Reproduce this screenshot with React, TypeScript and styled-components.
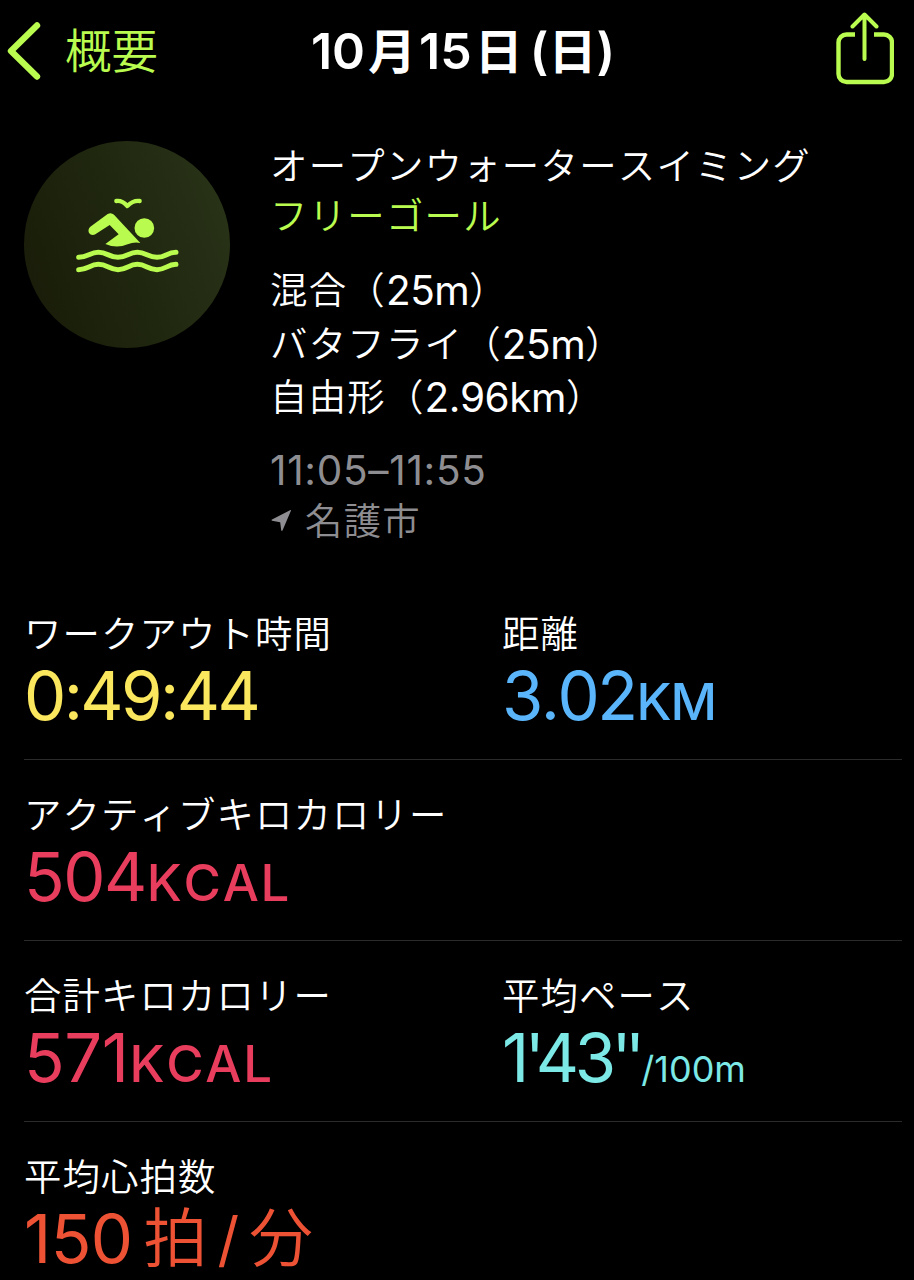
import React from "react";
import { createGlobalStyle, styled } from "styled-components";

interface IMetric {
  label: string;
  color: string;
  value: React.ReactNode;
}

const lime = "#b9fb4f";

export default function App() {
  return (
    <>
      <GlobalStyle />
      <Screen>
        <Header>
          <BackButton>
            <svg width="36" height="60" viewBox="0 0 36 60" fill="none">
              <path d="M30 4.5L4 30L30 55.5" stroke={lime} strokeWidth="6.4" strokeLinecap="round" strokeLinejoin="round" />
            </svg>
            <span>概要</span>
          </BackButton>
          <Title>
            <b>10</b>
            <Kanji>月</Kanji>
            <b>15</b>
            <Kanji>日</Kanji>
            <Paren>(</Paren>
            <span>日</span>
            <b>)</b>
          </Title>
          <ShareButton>
            <svg width="58" height="74" viewBox="0 0 58 74" fill="none" stroke={lime} strokeLinecap="round" strokeLinejoin="round">
              <path d="M19 22.5H10.5a8 8 0 0 0-8 8V62a8 8 0 0 0 8 8H48a8 8 0 0 0 8-8V30.5a8 8 0 0 0-8-8H38" strokeWidth="4.4" strokeLinecap="butt" />
              <path d="M28.5 47V3M16.5 14.5L28.5 2.5L40.5 14.5" strokeWidth="4" />
            </svg>
          </ShareButton>
        </Header>

        <Hero>
          <Badge>
            <SwimIcon />
          </Badge>
          <Details>
            <Line $height={50}>オープンウォータースイミング</Line>
            <Line $height={50} $color={lime}>フリーゴール</Line>
            <Strokes>
              <Line $height={53.5}>混合（<Latin>25m</Latin>）</Line>
              <Line $height={53.5}>バタフライ（<Latin>25m</Latin>）</Line>
              <Line $height={53.5}>自由形（<Latin>2.96km</Latin>）</Line>
            </Strokes>
            <Line $height={50} $color="#8e8e92">
              <Latin $track={0.7}>11:05–11:55</Latin>
            </Line>
            <Line $height={50} $color="#8e8e92">
              <Arrow width="35" height="22" viewBox="0 0 35 22" fill="#8e8e92">
                <path d="M21 0.5L12.5 20.5Q11.8 21.5 11.2 20.3L10.2 12.3L2 10.8Q1 10 2 9.4L20 0.3Q21.2 -0.3 21 0.5Z" />
              </Arrow>
              名護市
            </Line>
          </Details>
        </Hero>

        {rows.map((row, index) => (
          <MetricRow key={index}>
            {row.map((metric) => (
              <div key={metric.label}>
                <Label>{metric.label}</Label>
                <Value $color={metric.color}>{metric.value}</Value>
              </div>
            ))}
          </MetricRow>
        ))}
      </Screen>
    </>
  );
}

function SwimIcon() {
  return (
    <svg width="207" height="207" viewBox="12 33 621 621" fill={lime} stroke={lime} strokeLinecap="round" strokeLinejoin="round">
      <g fill="none" strokeWidth="15">
        <path d="M289 213C303 211 314 219 322 228C331 219 343 211 359 213" strokeWidth="13" />
        <path d="M176 382C203 382 210 367 235 367C262 367 268 382 294 382C321 382 326 367 352 367C378 367 384 382 411 382C436 382 441 367 468 367" />
        <path d="M176 419C203 419 210 403 235 403C262 403 268 419 294 419C321 419 326 403 352 403C378 403 384 419 411 419C436 419 441 404 468 403" />
      </g>
      <circle cx="373" cy="294" r="29.5" stroke="none" />
      <path
        stroke="none"
        d="M211 290L263 252Q273 246 282 254L361 339Q342 335 323 343Q290 357 256 342L296 313L269 285L226 313C210 321 198 302 211 290Z"
      />
    </svg>
  );
}

const GlobalStyle = createGlobalStyle`
  body {
    margin: 0;
    background: #000;
  }
`;

const Screen = styled.main`
  box-sizing: border-box;
  width: 914px;
  height: 1280px;
  overflow: hidden;
  background: #000;
  color: #fff;
  font-family: "Noto Sans CJK JP", sans-serif;
  font-weight: 350;
  font-kerning: none;
  white-space: nowrap;
`;

const Header = styled.header`
  display: grid;
  grid-template-columns: 1fr auto 1fr;
  align-items: center;
  height: 101px;
  padding: 0 20px 0 7px;
`;

const BackButton = styled.div`
  display: flex;
  align-items: center;
  gap: 22px;
  color: ${lime};
  font-size: 46.5px;
  line-height: 60px;

  span {
    padding-bottom: 5px;
  }
`;

const Title = styled.h1`
  display: flex;
  align-items: center;
  margin: 0;
  padding-left: 25px;
  font-size: 48px;
  font-weight: 700;
  line-height: 60px;

  b {
    font-family: Inter, sans-serif;
    font-weight: 600;
    font-size: 50px;
  }

  span {
    padding-bottom: 5px;
  }
`;

const Kanji = styled.span`
  margin: 0 3px;
`;

const Paren = styled.b`
  margin-left: 4px;
`;

const ShareButton = styled.div`
  display: flex;
  justify-content: flex-end;
  padding-bottom: 4px;
`;

const Hero = styled.section`
  display: flex;
  gap: 40px;
  height: 438px;
  padding: 40px 24px 0;
`;

const Badge = styled.div`
  flex: none;
  width: 206px;
  height: 207px;
  border-radius: 50%;
  background: linear-gradient(70deg, #191d09 10%, #20270f 50%, #2a3519 100%);
`;

const Details = styled.div`
  margin-top: -2px;
  font-size: 37.4px;
  letter-spacing: 1.25px;
`;

const Line = styled.div<{ $height: number; $color?: string }>`
  display: flex;
  align-items: center;
  height: ${(props) => props.$height}px;
  line-height: ${(props) => props.$height}px;
  color: ${(props) => props.$color || "#fff"};
`;

const Strokes = styled.div`
  margin: 23px 0 21px;
`;

const Latin = styled.span<{ $track?: number }>`
  padding-top: 4px;
  font-family: Inter, sans-serif;
  font-size: 40.5px;
  font-weight: 400;
  letter-spacing: ${(props) => props.$track || -0.5}px;
`;

const Arrow = styled.svg`
  margin-top: 5px;
`;

const MetricRow = styled.section`
  display: grid;
  grid-template-columns: 478px 1fr;
  box-sizing: border-box;
  height: 181px;
  margin: 0 12px 0 24px;
  padding-top: 28px;
  border-bottom: 1px solid #2b2b2b;
`;

const Label = styled.div`
  font-size: 37.4px;
  letter-spacing: 1.1px;
  line-height: 50px;
`;

const Value = styled.div<{ $color: string }>`
  display: flex;
  align-items: baseline;
  height: 76px;
  margin-top: 1px;
  line-height: 76px;
  color: ${(props) => props.$color};
`;

const Digits = styled.span<{ $track?: number }>`
  font-family: Inter, sans-serif;
  font-size: 67px;
  font-weight: 400;
  letter-spacing: ${(props) => props.$track || -1.5}px;
`;

const Unit = styled.span<{ $track?: number }>`
  margin-left: 1px;
  font-family: Inter, sans-serif;
  font-size: 51px;
  font-weight: 500;
  letter-spacing: ${(props) => props.$track || 0}px;
`;

const PerUnit = styled.span`
  margin-left: 3px;
  font-family: Inter, sans-serif;
  font-size: 36px;
  font-weight: 400;
`;

const BeatUnit = styled.span`
  align-self: flex-start;
  margin: -6px 0 0 11px;
  font-size: 64px;
`;

const Slash = styled.span`
  margin: 0 10px;
  font-family: Inter, sans-serif;
  font-size: 60px;
  font-weight: 400;
`;

const rows: IMetric[][] = [
  [
    { label: "ワークアウト時間", color: "#fbe75d", value: <Digits $track={-2.6}>0:49:44</Digits> },
    {
      label: "距離",
      color: "#5ab5fb",
      value: (
        <>
          <Digits $track={-2.6}>3.02</Digits>
          <Unit $track={-1}>KM</Unit>
        </>
      ),
    },
  ],
  [
    {
      label: "アクティブキロカロリー",
      color: "#e83d5c",
      value: (
        <>
          <Digits>504</Digits>
          <Unit $track={1.7}>KCAL</Unit>
        </>
      ),
    },
  ],
  [
    {
      label: "合計キロカロリー",
      color: "#e83d5c",
      value: (
        <>
          <Digits $track={-0.5}>571</Digits>
          <Unit $track={1.7}>KCAL</Unit>
        </>
      ),
    },
    {
      label: "平均ペース",
      color: "#7ce9e6",
      value: (
        <>
          <Digits $track={-4.5}>1</Digits>
          <Digits $track={-9}>'</Digits>
          <Digits $track={-4.5}>43</Digits>
          <Digits $track={-6.7}>''</Digits>
          <PerUnit>/100m</PerUnit>
        </>
      ),
    },
  ],
  [
    {
      label: "平均心拍数",
      color: "#ee5235",
      value: (
        <>
          <Digits $track={-0.6}>150</Digits>
          <BeatUnit>
            拍<Slash>/</Slash>分
          </BeatUnit>
        </>
      ),
    },
  ],
];
